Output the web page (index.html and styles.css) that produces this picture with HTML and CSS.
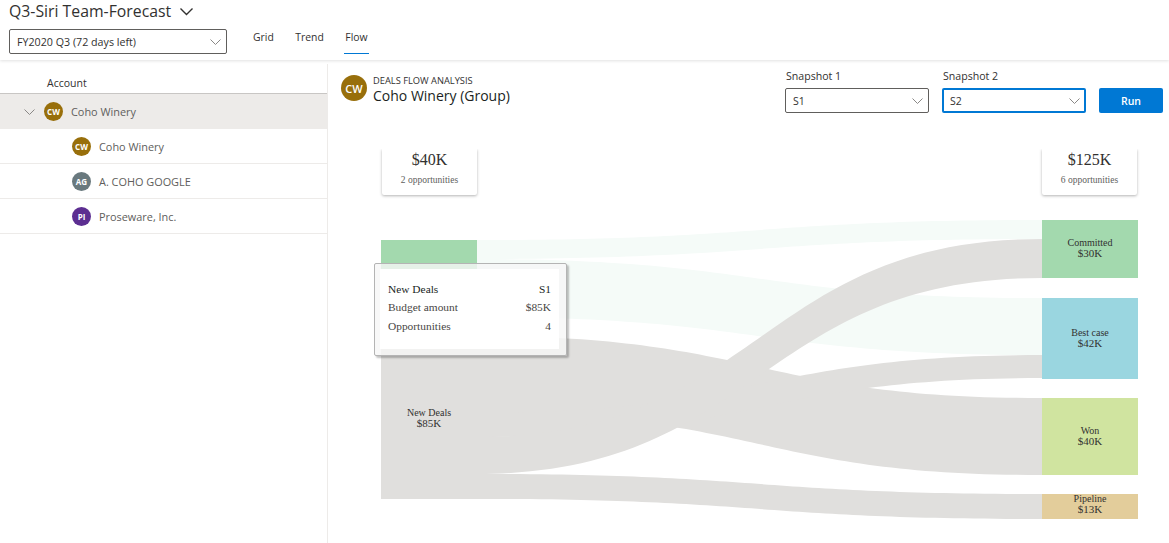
FILE: index.html
```html
<!DOCTYPE html>
<html lang="en">
<head>
    <meta charset="UTF-8">
    <title>Q3-Siri Team-Forecast</title>
    <link rel="stylesheet" href="styles.css">
</head>
<body>
    <header class="topbar">
        <div class="title-row">
            <h1>Q3-Siri Team-Forecast</h1>
            <svg class="title-chevron" width="13" height="8" viewBox="0 0 13 8"><polyline points="0.5,0.5 6.5,6.5 12.5,0.5"/></svg>
        </div>
        <div class="filter-row">
            <div class="select period-select">
                <span>FY2020 Q3 (72 days left)</span>
                <svg class="chevron" width="11" height="6" viewBox="0 0 11 6"><polyline points="0.5,0.5 5.5,5.5 10.5,0.5"/></svg>
            </div>
            <nav class="tabs">
                <a href="#">Grid</a>
                <a href="#">Trend</a>
                <a href="#" class="active">Flow</a>
            </nav>
        </div>
    </header>

    <div class="content">
        <aside class="accounts">
            <div class="accounts-head">Account</div>
            <div class="account-row group">
                <svg class="chevron" width="11" height="6" viewBox="0 0 11 6"><polyline points="0.5,0.5 5.5,5.5 10.5,0.5"/></svg>
                <span class="avatar gold">CW</span>
                <span>Coho Winery</span>
            </div>
            <div class="account-row">
                <span class="avatar gold">CW</span>
                <span>Coho Winery</span>
            </div>
            <div class="account-row">
                <span class="avatar slate">AG</span>
                <span>A. COHO GOOGLE</span>
            </div>
            <div class="account-row">
                <span class="avatar purple">PI</span>
                <span>Proseware, Inc.</span>
            </div>
        </aside>

        <main class="analysis">
            <div class="analysis-head">
                <div class="analysis-title">
                    <span class="avatar large gold">CW</span>
                    <div>
                        <div class="eyebrow">DEALS FLOW ANALYSIS</div>
                        <h2>Coho Winery (Group)</h2>
                    </div>
                </div>
                <div class="snapshot-controls">
                    <div class="field">
                        <label>Snapshot 1</label>
                        <div class="select">
                            <span>S1</span>
                            <svg class="chevron" width="11" height="6" viewBox="0 0 11 6"><polyline points="0.5,0.5 5.5,5.5 10.5,0.5"/></svg>
                        </div>
                    </div>
                    <div class="field">
                        <label>Snapshot 2</label>
                        <div class="select focused">
                            <span>S2</span>
                            <svg class="chevron" width="11" height="6" viewBox="0 0 11 6"><polyline points="0.5,0.5 5.5,5.5 10.5,0.5"/></svg>
                        </div>
                    </div>
                    <button class="run-btn">Run</button>
                </div>
            </div>

            <section class="chart">
                <div class="totals">
                    <div class="total-card">
                        <div class="total-amount">$40K</div>
                        <div class="total-count">2 opportunities</div>
                    </div>
                    <div class="total-card">
                        <div class="total-amount">$125K</div>
                        <div class="total-count">6 opportunities</div>
                    </div>
                </div>

                <!-- x is page x - 328, y is page y - 195 -->
                <svg class="sankey" width="841" height="348" viewBox="0 0 841 348">
                    <g class="link-s1">
                        <path d="M149 45 C431 45 431 25 714 25 L714 44 C431 44 431 64 149 64 Z"/>
                        <path d="M149 64 C431 64 431 103 714 103 L714 160 C431 160 431 122 149 122 Z"/>
                    </g>
                    <g class="link-s2">
                        <path d="M149 141 C431 141 431 203 714 203 L714 280 C431 280 431 218 149 218 Z"/>
                        <path d="M149 218 C431 218 431 160 714 160 L714 183 C431 183 431 242 149 242 Z"/>
                        <path d="M149 242 C431 242 431 44 714 44 L714 83 C431 83 431 279 149 279 Z"/>
                        <path d="M149 279 C431 279 431 299 714 299 L714 324 C431 324 431 304 149 304 Z"/>
                    </g>
                    <rect x="53" y="45" width="96" height="77" fill="#a3d9ae"/>
                    <rect x="53" y="141" width="96" height="163" fill="#e0dfdd"/>
                    <rect x="714" y="25" width="96" height="58" fill="#a3d9ae"/>
                    <rect x="714" y="103" width="96" height="81" fill="#9ad6e0"/>
                    <rect x="714" y="203" width="96" height="77" fill="#d0e4a0"/>
                    <rect x="714" y="299" width="96" height="25" fill="#e3cd9b"/>

                    <text class="node-name" x="101" y="221">New Deals</text>
                    <text class="node-value" x="101" y="232">$85K</text>
                    <text class="node-name" x="762" y="51">Committed</text>
                    <text class="node-value" x="762" y="62">$30K</text>
                    <text class="node-name" x="762" y="141">Best case</text>
                    <text class="node-value" x="762" y="152">$42K</text>
                    <text class="node-name" x="762" y="239">Won</text>
                    <text class="node-value" x="762" y="250">$40K</text>
                    <text class="node-name" x="762" y="307">Pipeline</text>
                    <text class="node-value" x="762" y="318">$13K</text>
                </svg>

                <div class="tooltip">
                    <div class="tooltip-body">
                        <div class="tooltip-row strong"><span>New Deals</span><span>S1</span></div>
                        <div class="tooltip-row"><span>Budget amount</span><span>$85K</span></div>
                        <div class="tooltip-row"><span>Opportunities</span><span>4</span></div>
                    </div>
                </div>
            </section>
        </main>
    </div>
</body>
</html>
```

FILE: styles.css
```css
:root {
    --text: #323130;
    --muted: #605e5c;
    --line: #edebe9;
    --blue: #0078d4;
    --flow-grey: #e0dfdd;
    --flow-green: #f5fbf8;
}

html, body {
    height: 100%;
}

body {
    margin: 0;
    font-family: 'Open Sans', 'Noto Sans', sans-serif;
    color: var(--text);
    background: #fff;
    overflow: hidden;
}

.topbar {
    height: 60px;
    padding: 0 9px;
    box-sizing: border-box;
    box-shadow: 0 1px 3px rgba(0, 0, 0, 0.12);
}

.title-row {
    display: flex;
    align-items: center;
    gap: 9px;
    height: 23px;
}

.title-row h1 {
    margin: 0;
    font-size: 15.8px;
    font-weight: 400;
    line-height: 23px;
}

.title-chevron polyline,
.chevron polyline {
    fill: none;
    stroke-width: 1;
}

.title-chevron polyline {
    stroke: var(--text);
    stroke-width: 1.4;
}

.chevron polyline {
    stroke: #8a8886;
}

.filter-row {
    display: flex;
    margin-top: 6px;
}

.select {
    display: flex;
    align-items: center;
    justify-content: space-between;
    box-sizing: border-box;
    width: 144px;
    height: 25px;
    padding: 0 4px 0 7px;
    border: 1px solid #605e5c;
    border-radius: 2px;
    font-size: 10.5px;
}

.select .chevron {
    flex: none;
    margin-right: 1px;
}

.period-select {
    width: 218px;
    font-size: 10.7px;
}

.tabs {
    display: flex;
    gap: 19.5px;
    margin-left: 25px;
    height: 25px;
}

.tabs a {
    color: var(--text);
    text-decoration: none;
    font-size: 10.4px;
    line-height: 16px;
    padding: 0 1px;
}

.tabs a.active {
    border-bottom: 1px solid var(--blue);
    box-sizing: border-box;
}

.content {
    display: flex;
    height: calc(100% - 60px);
    padding-top: 4px;
    box-sizing: border-box;
}

.accounts {
    width: 327px;
    flex: none;
    border-right: 1px solid var(--line);
    font-size: 10.9px;
    color: var(--muted);
}

.accounts-head {
    height: 30px;
    box-sizing: border-box;
    padding: 11px 0 0 47px;
    font-size: 10.5px;
    line-height: 16px;
    color: var(--text);
    border-bottom: 1px solid #c8c6c4;
}

.account-row {
    display: flex;
    align-items: center;
    gap: 8px;
    height: 35px;
    box-sizing: border-box;
    padding: 1px 0 0 72px;
    border-bottom: 1px solid var(--line);
}

.account-row.group {
    background: var(--line);
    padding: 0 0 0 24px;
    border-bottom: 0;
}

.account-row.group .chevron {
    margin-right: 1px;
}

.avatar {
    flex: none;
    display: flex;
    align-items: center;
    justify-content: center;
    width: 19px;
    height: 19px;
    border-radius: 50%;
    color: #fff;
    font-size: 8px;
    font-weight: 700;
}

.avatar.large {
    width: 26px;
    height: 26px;
    font-size: 11px;
    font-weight: 600;
}

.gold { background: #986f0b; }
.slate { background: #69797e; }
.purple { background: #5c2e91; }

.analysis {
    flex: 1;
    min-width: 0;
}

.analysis-head {
    display: flex;
    justify-content: space-between;
    height: 85px;
    box-sizing: border-box;
    padding: 3px 6px 0 13px;
}

.analysis-title {
    display: flex;
    gap: 6px;
    margin-top: 8px;
}

.eyebrow {
    font-size: 9.3px;
    line-height: 12px;
}

.analysis-title h2 {
    margin: 0;
    font-size: 14px;
    font-weight: 400;
    line-height: 18px;
    color: #201f1e;
}

.snapshot-controls {
    display: flex;
    align-items: flex-end;
    gap: 13px;
    height: 46px;
}

.field label {
    display: block;
    font-size: 10.6px;
    line-height: 19px;
    padding: 0 0 2px 1px;
}

.select.focused {
    border: 2px solid var(--blue);
    padding: 0 3px 0 6px;
}

.run-btn {
    width: 64px;
    height: 25px;
    border: 0;
    border-radius: 2px;
    background: var(--blue);
    color: #fff;
    font-family: inherit;
    font-size: 10.5px;
    font-weight: 600;
}

.chart {
    position: relative;
    font-family: 'Liberation Serif', serif;
}

.totals {
    display: flex;
    justify-content: space-between;
    height: 46px;
    overflow: hidden;
    padding: 0 32px 4px 54px;
}

.total-card {
    width: 95px;
    height: 46px;
    box-sizing: border-box;
    padding-top: 1px;
    text-align: center;
    background: #fff;
    border-radius: 0 0 2px 2px;
    box-shadow: 0 1px 3px rgba(0, 0, 0, 0.3);
}

.total-amount {
    font-size: 16px;
    line-height: 20px;
}

.total-count {
    font-size: 9.5px;
    line-height: 11px;
    margin-top: 5px;
    color: var(--muted);
}

.sankey {
    display: block;
    margin-top: -4px;
}

.link-s1 path { fill: var(--flow-green); }
.link-s2 path { fill: var(--flow-grey); }

.node-name,
.node-value {
    text-anchor: middle;
    fill: #323130;
}

.node-name { font-size: 10px; }
.node-value { font-size: 11px; }

.tooltip {
    position: absolute;
    left: 46px;
    top: 114px;
    width: 193px;
    height: 93px;
    box-sizing: border-box;
    padding: 5px 7px 6px 5px;
    background: rgba(246, 246, 246, 0.8);
    border: 1px solid #b4b4b4;
    border-radius: 2px;
    box-shadow: 2px 2px 2px rgba(0, 0, 0, 0.25);
}

.tooltip-body {
    height: 100%;
    box-sizing: border-box;
    padding: 11px 8px 0;
    background: #fff;
    font-size: 11.4px;
    color: #484644;
}

.tooltip-row {
    display: flex;
    justify-content: space-between;
    line-height: 18.4px;
}

.tooltip-row.strong {
    color: #201f1e;
}
```
